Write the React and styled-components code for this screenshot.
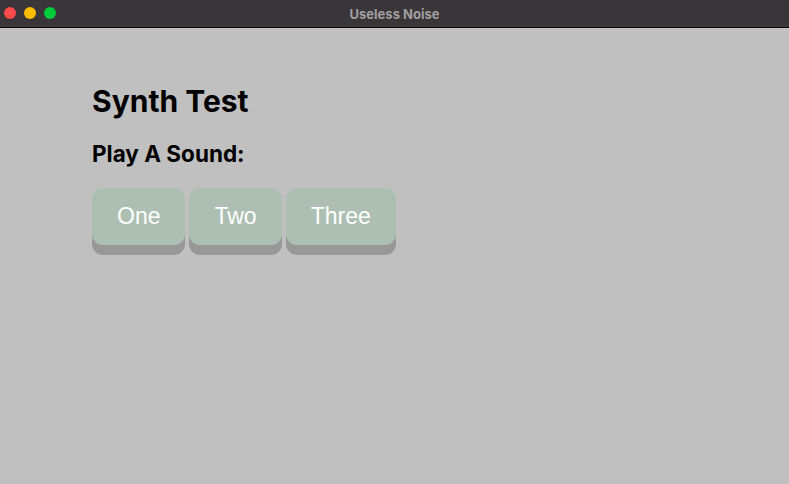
import styled, { createGlobalStyle } from 'styled-components'

const GlobalStyle = createGlobalStyle`
  html, body {
    margin: 0;
    padding: 0;
    background: #c0c0c0;
  }
  body {
    font-family: Inter, "Liberation Sans", sans-serif;
  }
`

const Window = styled.div`
  width: 789px;
  height: 484px;
  display: flex;
  flex-direction: column;
  background: #c0c0c0;
`

const TitleBar = styled.div`
  position: relative;
  height: 27px;
  flex-shrink: 0;
  display: flex;
  align-items: center;
  justify-content: center;
  background: #3a3538;
  border-bottom: 1px solid #0c0b0c;
`

const Lights = styled.div`
  position: absolute;
  left: 4px;
  top: 7px;
  display: flex;
  gap: 8px;
`

const Light = styled.span`
  width: 12px;
  height: 12px;
  border-radius: 50%;
  background: ${(p) => p.color};
`

const Title = styled.div`
  color: #a29ea1;
  font-size: 13px;
  font-weight: 700;
`

const Content = styled.main`
  padding: 55px 0 0 92px;
`

const Heading = styled.h1`
  margin: 0;
  font-size: 30px;
  font-weight: 700;
  color: #000;
  line-height: 36px;
`

const SubHeading = styled.h2`
  margin: 22px 0 0;
  font-size: 22.5px;
  font-weight: 700;
  color: #000;
  line-height: 26px;
`

const ButtonRow = styled.div`
  display: flex;
  gap: 4px;
  margin-top: 21px;
`

const SoundButton = styled.button`
  height: 57px;
  padding: 0 25px;
  border: none;
  border-radius: 11px;
  background: #adbfb2;
  color: #fff;
  font-family: "Liberation Sans", Arial, sans-serif;
  font-size: 23px;
  box-shadow: 0 10px 0 #989898;
  cursor: pointer;
`

const sounds = ['One', 'Two', 'Three']

const App = () => {
  return (
    <Window>
      <GlobalStyle />
      <TitleBar>
        <Lights>
          <Light color="#fe4a4b" />
          <Light color="#fdbb00" />
          <Light color="#00cb3a" />
        </Lights>
        <Title>Useless Noise</Title>
      </TitleBar>
      <Content>
        <Heading>Synth Test</Heading>
        <SubHeading>Play A Sound:</SubHeading>
        <ButtonRow>
          {sounds.map((s) => (
            <SoundButton key={s}>{s}</SoundButton>
          ))}
        </ButtonRow>
      </Content>
    </Window>
  )
}

export default App
